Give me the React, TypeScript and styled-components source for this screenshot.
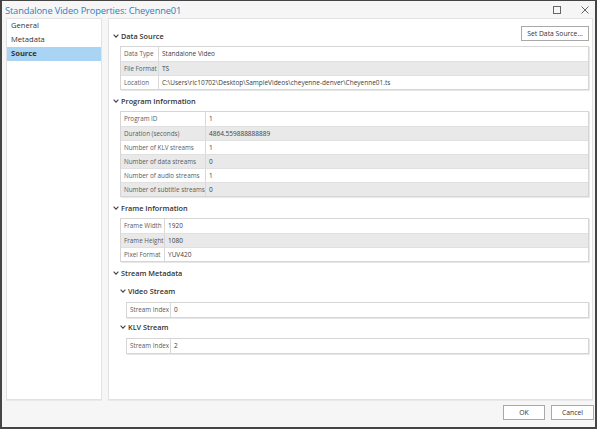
import styled, { createGlobalStyle } from "styled-components";

const GlobalStyle = createGlobalStyle`
  html, body {
    margin: 0;
    padding: 0;
    background: #ffffff;
  }
  * {
    box-sizing: border-box;
  }
  body {
    font-family: "Open Sans", "Noto Sans", sans-serif;
  }
`;

type Row = { label: string; value: string };

const dataSource: Row[] = [
  { label: "Data Type", value: "Standalone Video" },
  { label: "File Format", value: "TS" },
  {
    label: "Location",
    value: "C:\\Users\\ric10702\\Desktop\\SampleVideos\\cheyenne-denver\\Cheyenne01.ts",
  },
];

const programInfo: Row[] = [
  { label: "Program ID", value: "1" },
  { label: "Duration (seconds)", value: "4864.559888888889" },
  { label: "Number of KLV streams", value: "1" },
  { label: "Number of data streams", value: "0" },
  { label: "Number of audio streams", value: "1" },
  { label: "Number of subtitle streams", value: "0" },
];

const frameInfo: Row[] = [
  { label: "Frame Width", value: "1920" },
  { label: "Frame Height", value: "1080" },
  { label: "Pixel Format", value: "YUV420" },
];

const Window = styled.div`
  width: 597px;
  height: 429px;
  background: #f5f6f5;
  border: 1px solid #454545;
  border-left-width: 2px;
  border-bottom-width: 2px;
  border-right-width: 2px;
  display: flex;
  flex-direction: column;
`;

const TitleBar = styled.div`
  height: 17px;
  display: flex;
  align-items: center;
  gap: 8px;
  padding: 0 0 0 3px;
`;

const Title = styled.div`
  flex: 1;
  color: #2f80c3;
  font-size: 9.3px;
  letter-spacing: -0.15px;
  padding-top: 1px;
`;

const WinButton = styled.div`
  width: 20px;
  height: 17px;
  display: flex;
  align-items: center;
  justify-content: center;
`;

const Body = styled.div`
  flex: 1;
  display: flex;
  gap: 6px;
  padding: 0 2px 0 4px;
  min-height: 0;
`;

const Panel = styled.div`
  background: #ffffff;
  border: 1px solid #e2e2e2;
  box-shadow: 0 1px 0 #e9e9e9;
`;

const Nav = styled(Panel)`
  width: 96px;
`;

const NavItem = styled.div<{ $active?: boolean }>`
  height: 14px;
  line-height: 13px;
  padding-left: 4px;
  font-size: 7.6px;
  color: #333333;
  font-weight: ${({ $active }) => ($active ? 700 : 400)};
  background: ${({ $active }) => ($active ? "#a9d4f3" : "transparent")};
`;

const Content = styled(Panel)`
  flex: 1;
  padding: 6px 3px 0 4px;
`;

const TopRow = styled.div`
  display: flex;
  align-items: flex-start;
  justify-content: space-between;
  height: 20px;
`;

const SectionHeader = styled.div<{ $indent?: number; $first?: boolean }>`
  height: 19px;
  margin-top: ${({ $first }) => ($first ? 0 : 1)}px;
  padding-top: ${({ $first }) => ($first ? 3 : 0)}px;
  margin-left: ${({ $indent }) => $indent ?? 0}px;
  display: flex;
  align-items: center;
  gap: 2px;
  font-size: 7.3px;
  font-weight: 600;
  color: #333333;
`;

const SubHeader = styled(SectionHeader)`
  height: 18px;
  margin-top: 0;
`;

const Table = styled.div<{ $indent: number; $gap?: number }>`
  margin: ${({ $gap }) => $gap ?? 1}px 0 0 ${({ $indent }) => $indent}px;
  border: 1px solid #d6d6d6;
  box-shadow: 1px 1px 0 #e8e8e8;
`;

const TableRow = styled.div<{ $alt?: boolean; $labelWidth: number }>`
  display: grid;
  grid-template-columns: ${({ $labelWidth }) => $labelWidth}px 1fr;
  height: 14px;
  background: ${({ $alt }) => ($alt ? "#e9e9e9" : "#ffffff")};
  & + & {
    border-top: 1px solid #e0e0e0;
  }
`;

const Cell = styled.div<{ $label?: boolean }>`
  font-size: ${({ $label }) => ($label ? 6.3 : 6.5)}px;
  line-height: 13px;
  padding-left: 3px;
  white-space: nowrap;
  overflow: hidden;
  color: ${({ $label }) => ($label ? "#5c5c5c" : "#404040")};
  border-right: ${({ $label }) => ($label ? "1px solid #d9d9d9" : "none")};
`;

const Footer = styled.div`
  height: 27px;
  display: flex;
  align-items: center;
  justify-content: flex-end;
  gap: 6px;
  padding: 0 1px 2px 0;
`;

const Button = styled.button<{ $width: number; $offset?: number }>`
  width: ${({ $width }) => $width}px;
  height: 15px;
  margin-top: ${({ $offset }) => $offset ?? 0}px;
  padding: 0;
  background: #ffffff;
  border: 1px solid #a9a9a9;
  font-family: "Open Sans", "Noto Sans", sans-serif;
  font-size: 6.8px;
  color: #333333;
`;

const Chevron = () => (
  <svg width="6" height="4" viewBox="0 0 6 4">
    <polyline points="0.6,0.6 3,3.2 5.4,0.6" fill="none" stroke="#444" strokeWidth="1.1" />
  </svg>
);

const PropTable = ({
  rows,
  labelWidth,
  indent,
  gap,
}: {
  rows: Row[];
  labelWidth: number;
  indent: number;
  gap?: number;
}) => (
  <Table $indent={indent} $gap={gap}>
    {rows.map((r, i) => (
      <TableRow key={r.label} $alt={i % 2 === 1} $labelWidth={labelWidth}>
        <Cell $label>{r.label}</Cell>
        <Cell>{r.value}</Cell>
      </TableRow>
    ))}
  </Table>
);

export default function App() {
  return (
    <>
      <GlobalStyle />
      <Window>
        <TitleBar>
          <Title>Standalone Video Properties: Cheyenne01</Title>
          <WinButton>
            <svg width="8" height="8" viewBox="0 0 8 8">
              <rect x="0.5" y="0.5" width="7" height="7" fill="none" stroke="#666" strokeWidth="1" />
            </svg>
          </WinButton>
          <WinButton>
            <svg width="8" height="8" viewBox="0 0 8 8">
              <path d="M0.5 0.5 L7.5 7.5 M7.5 0.5 L0.5 7.5" stroke="#666" strokeWidth="1" />
            </svg>
          </WinButton>
        </TitleBar>
        <Body>
          <Nav>
            <NavItem>General</NavItem>
            <NavItem>Metadata</NavItem>
            <NavItem $active>Source</NavItem>
          </Nav>
          <Content>
            <TopRow>
              <SectionHeader $first>
                <Chevron />
                Data Source
              </SectionHeader>
              <Button $width={68} $offset={1}>
                Set Data Source...
              </Button>
            </TopRow>
            <PropTable rows={dataSource} labelWidth={38} indent={7} />

            <SectionHeader>
              <Chevron />
              Program Information
            </SectionHeader>
            <PropTable rows={programInfo} labelWidth={85} indent={7} />

            <SectionHeader>
              <Chevron />
              Frame Information
            </SectionHeader>
            <PropTable rows={frameInfo} labelWidth={44} indent={7} />

            <SectionHeader>
              <Chevron />
              Stream Metadata
            </SectionHeader>
            <SubHeader $indent={7}>
              <Chevron />
              Video Stream
            </SubHeader>
            <PropTable rows={[{ label: "Stream Index", value: "0" }]} labelWidth={44} indent={13} gap={2} />
            <SubHeader $indent={7}>
              <Chevron />
              KLV Stream
            </SubHeader>
            <PropTable rows={[{ label: "Stream Index", value: "2" }]} labelWidth={44} indent={13} gap={2} />
          </Content>
        </Body>
        <Footer>
          <Button $width={42}>OK</Button>
          <Button $width={43}>Cancel</Button>
        </Footer>
      </Window>
    </>
  );
}
